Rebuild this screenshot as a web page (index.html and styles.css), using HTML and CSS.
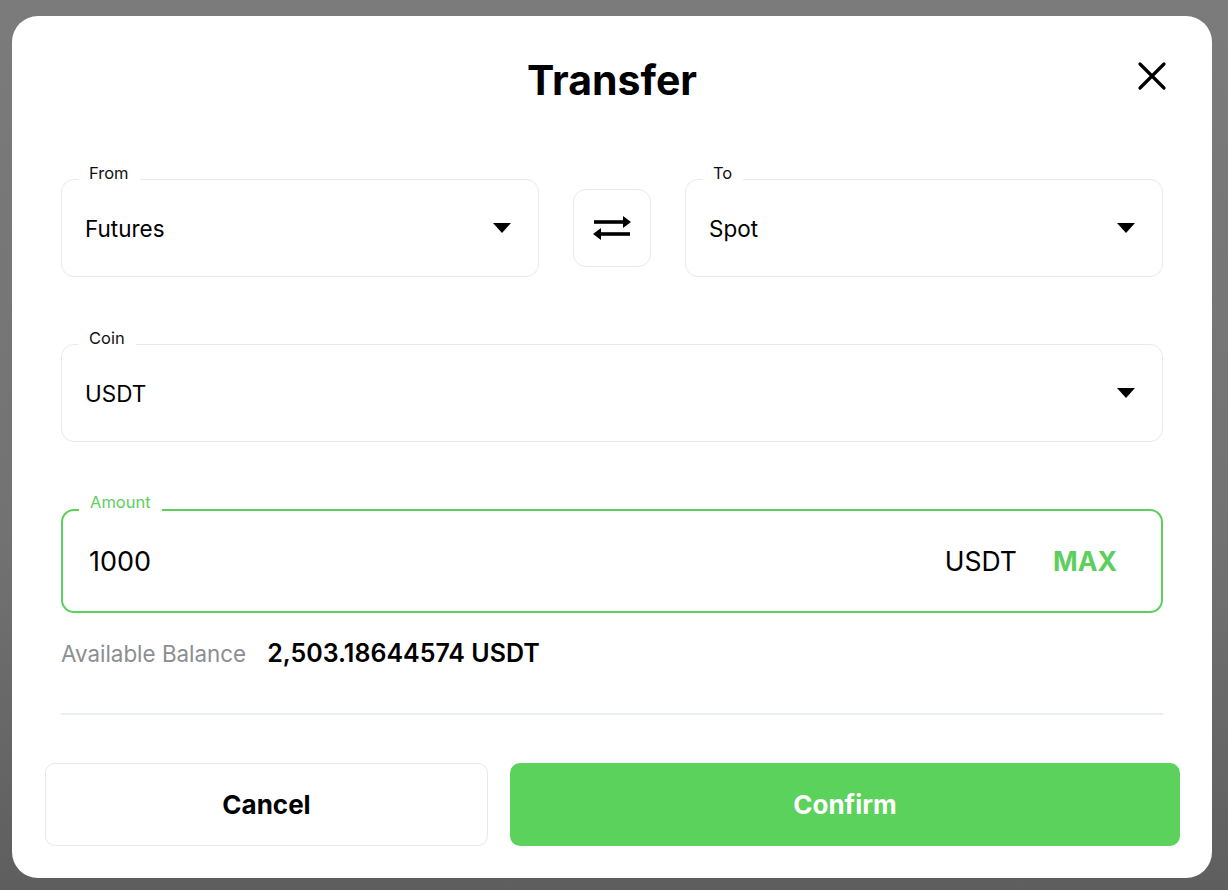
FILE: index.html
```html
<!DOCTYPE html>
<html lang="en">
<head>
<meta charset="utf-8">
<title>Transfer</title>
<link rel="stylesheet" href="styles.css">
</head>
<body>
<div class="backdrop">
  <div class="modal">
    <div class="modal-header">
      <h1 class="title">Transfer</h1>
      <button class="close" aria-label="Close">
        <svg width="32" height="32" viewBox="0 0 32 32"><path d="M4 4 L28 28 M28 4 L4 28" stroke="#000" stroke-width="3.2" stroke-linecap="round" fill="none"/></svg>
      </button>
    </div>

    <div class="form">
      <div class="row">
        <div class="field select">
          <span class="label">From</span>
          <span class="value">Futures</span>
          <span class="caret"></span>
        </div>
        <button class="swap" aria-label="Swap">
          <svg width="40" height="30" viewBox="0 0 40 30"><path d="M2 9 H33" stroke="#000" stroke-width="3.6" fill="none"/><path d="M31 3 L39 9 L31 15 Z" fill="#000"/><path d="M38 21 H7" stroke="#000" stroke-width="3.6" fill="none"/><path d="M9 15 L1 21 L9 27 Z" fill="#000"/></svg>
        </button>
        <div class="field select">
          <span class="label">To</span>
          <span class="value">Spot</span>
          <span class="caret"></span>
        </div>
      </div>

      <div class="field select coin">
        <span class="label">Coin</span>
        <span class="value">USDT</span>
        <span class="caret"></span>
      </div>

      <div class="field amount">
        <span class="label">Amount</span>
        <span class="amount-value">1000</span>
        <span class="unit">USDT</span>
        <span class="max">MAX</span>
      </div>

      <div class="balance">
        <span class="balance-label">Available Balance</span>
        <span class="balance-value">2,503.18644574 USDT</span>
      </div>

      <div class="divider"></div>
    </div>

    <div class="actions">
      <button class="btn cancel">Cancel</button>
      <button class="btn confirm">Confirm</button>
    </div>
  </div>
</div>
</body>
</html>
```

FILE: styles.css
```css
* { box-sizing: border-box; }
html, body { margin: 0; padding: 0; }
body {
  width: 1228px;
  height: 890px;
  overflow: hidden;
  font-family: "Inter", "Noto Sans", sans-serif;
  color: #000;
  background: linear-gradient(180deg, #7b7b7b 0%, #727272 60%, #5e5e5e 100%);
}
.backdrop {
  padding: 16px 16px 12px 12px;
}
.modal {
  position: relative;
  width: 1200px;
  height: 862px;
  background: #fff;
  border-radius: 26px;
  display: flex;
  flex-direction: column;
}
.modal-header {
  position: relative;
  height: 128px;
  display: flex;
  align-items: center;
  justify-content: center;
}
.title {
  margin: 0;
  font-size: 41px;
  font-weight: 700;
}
.close {
  position: absolute;
  right: 44px;
  top: 44px;
  width: 32px;
  height: 32px;
  padding: 0;
  border: 0;
  background: none;
  display: flex;
}
.form {
  padding: 35px 49px 0 49px;
  display: flex;
  flex-direction: column;
}
.row {
  display: flex;
  align-items: center;
  gap: 34px;
  margin-bottom: 67px;
}
.row .field { flex: 1; }
.field {
  position: relative;
  height: 98px;
  border: 1.5px solid #e6eaef;
  border-radius: 13px;
  display: flex;
  align-items: center;
  padding: 0 24px 0 23px;
}
.coin { margin-bottom: 67px; }
.label {
  position: absolute;
  left: 16px;
  top: -17px;
  padding: 0 11px;
  background: #fff;
  font-size: 16.5px;
  line-height: 20px;
  color: #111;
}
.value {
  flex: 1;
  font-size: 22.5px;
  font-weight: 400;
}
.caret {
  width: 0;
  height: 0;
  border-left: 9.5px solid transparent;
  border-right: 9.5px solid transparent;
  border-top: 10px solid #000;
  margin-right: 3px;
}
.swap {
  width: 78px;
  height: 78px;
  border: 1.5px solid #e6eaef;
  border-radius: 13px;
  background: #fff;
  display: flex;
  align-items: center;
  justify-content: center;
  padding: 0;
}
.amount {
  height: 104px;
  border: 2px solid #5ccf5c;
  padding: 0 44px 0 26px;
}
.amount .label {
  color: #5ccf5c;
  top: -19px;
}
.amount-value {
  flex: 1;
  font-size: 27px;
  font-weight: 400;
}
.unit {
  font-size: 26.5px;
  font-weight: 400;
  margin-right: 36px;
}
.max {
  font-size: 26.5px;
  font-weight: 700;
  color: #5ccf5c;
}
.balance {
  display: flex;
  align-items: center;
  gap: 21px;
  margin-top: 27px;
  height: 26px;
}
.balance-label {
  font-size: 22.4px;
  color: #8b8e93;
}
.balance-value {
  font-size: 25px;
  font-weight: 600;
}
.divider {
  height: 2px;
  background: #ebeef2;
  margin-top: 47px;
}
.actions {
  display: flex;
  gap: 22px;
  padding: 48px 32px 0 33px;
}
.btn {
  height: 83px;
  border-radius: 10px;
  font-family: "Inter", "Noto Sans", sans-serif;
  font-size: 26px;
  font-weight: 700;
  cursor: pointer;
}
.cancel {
  width: 443px;
  background: #fff;
  border: 1.5px solid #e5e9ee;
  color: #000;
}
.confirm {
  flex: 1;
  background: #5bd25b;
  border: 0;
  color: #fff;
}
```
